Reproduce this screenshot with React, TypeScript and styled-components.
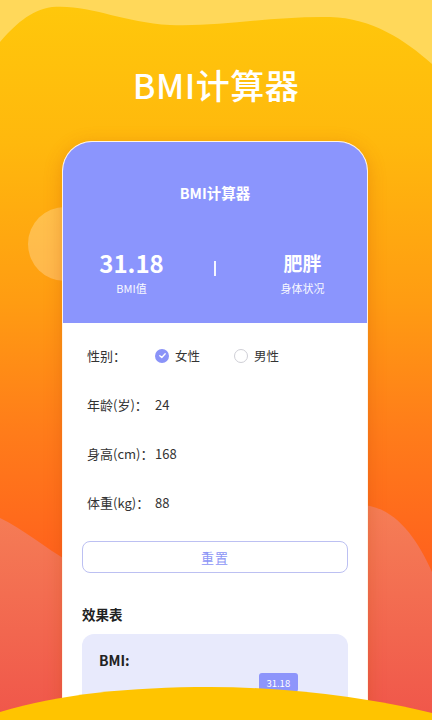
import React from "react";
import styled, { createGlobalStyle } from "styled-components";

const Global = createGlobalStyle`
  html, body { margin: 0; padding: 0; }
  body { font-family: "Noto Sans CJK SC", "Noto Sans", sans-serif; }
  * { box-sizing: border-box; }
`;

const Screen = styled.div`
  position: relative;
  width: 432px;
  height: 720px;
  overflow: hidden;
  background: linear-gradient(180deg, #ffc80b 0%, #ffb80d 20%, #ff9c12 42%, #ff7c1a 60%, #ff621d 78%, #ff5a1e 100%);
`;

const Backdrop = styled.svg`
  position: absolute;
  inset: 0;
  width: 432px;
  height: 720px;
  z-index: 0;
`;

const Foreground = styled.svg`
  position: absolute;
  left: 0;
  bottom: 0;
  width: 432px;
  height: 40px;
  z-index: 3;
`;

const Content = styled.div`
  position: relative;
  z-index: 1;
  display: flex;
  flex-direction: column;
  align-items: center;
  padding-top: 63px;
`;

const BigTitle = styled.h1`
  margin: 0;
  font-size: 34px;
  line-height: 44px;
  font-weight: 500;
  color: #ffffff;
  letter-spacing: 0.5px;
`;

const Phone = styled.div`
  margin-top: 34px;
  align-self: flex-start;
  margin-left: 62px;
  width: 306px;
  border: 1.5px solid #fff4e6;
  border-bottom: none;
  border-radius: 30px 30px 0 0;
  overflow: hidden;
  background: #ffffff;
  box-shadow: 0 4px 18px rgba(190, 70, 0, 0.28);
`;

const Header = styled.div`
  background: #8b95fd;
  height: 181px;
  padding-top: 41px;
  display: flex;
  flex-direction: column;
  align-items: center;
  color: #ffffff;
`;

const HeaderTitle = styled.div`
  font-size: 14.5px;
  line-height: 20px;
  font-weight: 700;
`;

const Stats = styled.div`
  margin-top: 45px;
  width: 100%;
  display: grid;
  grid-template-columns: 137px 30px 1fr;
  align-items: start;
`;

const Stat = styled.div<{ $shift?: number }>`
  display: flex;
  flex-direction: column;
  align-items: center;
  padding-left: ${(p) => p.$shift ?? 0}px;
`;

const StatValue = styled.div<{ $size: number }>`
  font-size: ${(p) => p.$size}px;
  line-height: 30px;
  font-weight: 700;
`;

const StatLabel = styled.div`
  margin-top: 2px;
  font-size: 11px;
  line-height: 16px;
  opacity: 0.95;
`;

const Divider = styled.div`
  justify-self: center;
  margin-top: 13px;
  width: 1.5px;
  height: 15px;
  background: rgba(255, 255, 255, 0.9);
`;

const Body = styled.div`
  padding: 8px 19px 0;
  height: 420px;
`;

const Row = styled.div`
  height: 49px;
  padding-left: 5px;
  display: grid;
  grid-template-columns: 68px 1fr;
  align-items: center;
  font-size: 13px;
  color: #333333;
`;

const Label = styled.span``;

const Value = styled.span``;

const Options = styled.div`
  display: flex;
  align-items: center;
`;

const Option = styled.label`
  display: flex;
  align-items: center;
  gap: 6px;
  width: 79px;
  font-size: 12.5px;
  color: #333333;
`;

const Radio = styled.span<{ $checked?: boolean }>`
  width: 14px;
  height: 14px;
  border-radius: 50%;
  display: flex;
  align-items: center;
  justify-content: center;
  background: ${(p) => (p.$checked ? "#8a93f8" : "#ffffff")};
  border: ${(p) => (p.$checked ? "none" : "1px solid #cfcfd6")};
`;

const ResetButton = styled.button`
  margin-top: 14px;
  width: 100%;
  height: 32px;
  border: 1.5px solid #bcc0f2;
  border-radius: 8px;
  background: #ffffff;
  color: #8d95f6;
  font-family: inherit;
  font-size: 13px;
  letter-spacing: 1px;
`;

const SectionTitle = styled.div`
  margin-top: 31px;
  font-size: 13.5px;
  line-height: 20px;
  font-weight: 700;
  color: #222222;
`;

const ChartCard = styled.div`
  margin-top: 10px;
  background: #e8eafc;
  border-radius: 12px;
  padding: 16px 17px 30px;
  height: 140px;
`;

const ChartLabel = styled.div`
  font-size: 14px;
  line-height: 20px;
  font-weight: 700;
  color: #222222;
`;

const Marker = styled.div`
  margin-top: 3px;
  width: 39px;
  height: 19px;
  border-radius: 3px;
  background: #8d95fb;
  color: #ffffff;
  font-size: 9.5px;
  display: flex;
  align-items: center;
  justify-content: center;
`;

const Check = () => (
  <svg width="9" height="9" viewBox="0 0 10 10">
    <path d="M2 5.2 L4.2 7.3 L8 3" fill="none" stroke="#fff" strokeWidth="1.5" strokeLinecap="round" strokeLinejoin="round" />
  </svg>
);

export default function App() {
  const bmi = 31.18;
  const markerLeft = (bmi / 40) * 205;
  return (
    <Screen>
      <Global />
      <Backdrop viewBox="0 0 432 720">
        <defs>
          <linearGradient id="salmon" x1="0" y1="0" x2="0" y2="1">
            <stop offset="0" stopColor="#f57e56" />
            <stop offset="1" stopColor="#f0564a" />
          </linearGradient>
        </defs>
        <path d="M0 0 H432 V64 C405 40 372 18 330 17 C270 16 220 27 170 25 C120 22 90 4 52 7 C30 10 14 26 0 42 Z" fill="#ffd85a" />
        <circle cx="65" cy="244" r="37" fill="rgba(255,255,255,0.25)" />
        <path d="M0 518 C22 528 45 548 70 562 C150 600 260 560 330 520 C350 508 362 505 370 506 C398 512 418 540 432 572 V720 H0 Z" fill="url(#salmon)" />
      </Backdrop>
      <Content>
        <BigTitle>BMI计算器</BigTitle>
        <Phone>
          <Header>
            <HeaderTitle>BMI计算器</HeaderTitle>
            <Stats>
              <Stat>
                <StatValue $size={24}>31.18</StatValue>
                <StatLabel>BMI值</StatLabel>
              </Stat>
              <Divider />
              <Stat $shift={8}>
                <StatValue $size={19}>肥胖</StatValue>
                <StatLabel>身体状况</StatLabel>
              </Stat>
            </Stats>
          </Header>
          <Body>
            <Row>
              <Label>性别：</Label>
              <Options>
                <Option>
                  <Radio $checked>
                    <Check />
                  </Radio>
                  女性
                </Option>
                <Option>
                  <Radio />
                  男性
                </Option>
              </Options>
            </Row>
            <Row>
              <Label>年龄(岁)：</Label>
              <Value>24</Value>
            </Row>
            <Row>
              <Label>身高(cm)：</Label>
              <Value>168</Value>
            </Row>
            <Row>
              <Label>体重(kg)：</Label>
              <Value>88</Value>
            </Row>
            <ResetButton>重置</ResetButton>
            <SectionTitle>效果表</SectionTitle>
            <ChartCard>
              <ChartLabel>BMI:</ChartLabel>
              <Marker style={{ marginLeft: markerLeft }}>31.18</Marker>
            </ChartCard>
          </Body>
        </Phone>
      </Content>
      <Foreground viewBox="0 0 432 40" preserveAspectRatio="none">
        <path d="M0 32 C60 14 130 7 210 7 C290 7 370 18 432 33 V40 H0 Z" fill="#ffc400" />
      </Foreground>
    </Screen>
  );
}
